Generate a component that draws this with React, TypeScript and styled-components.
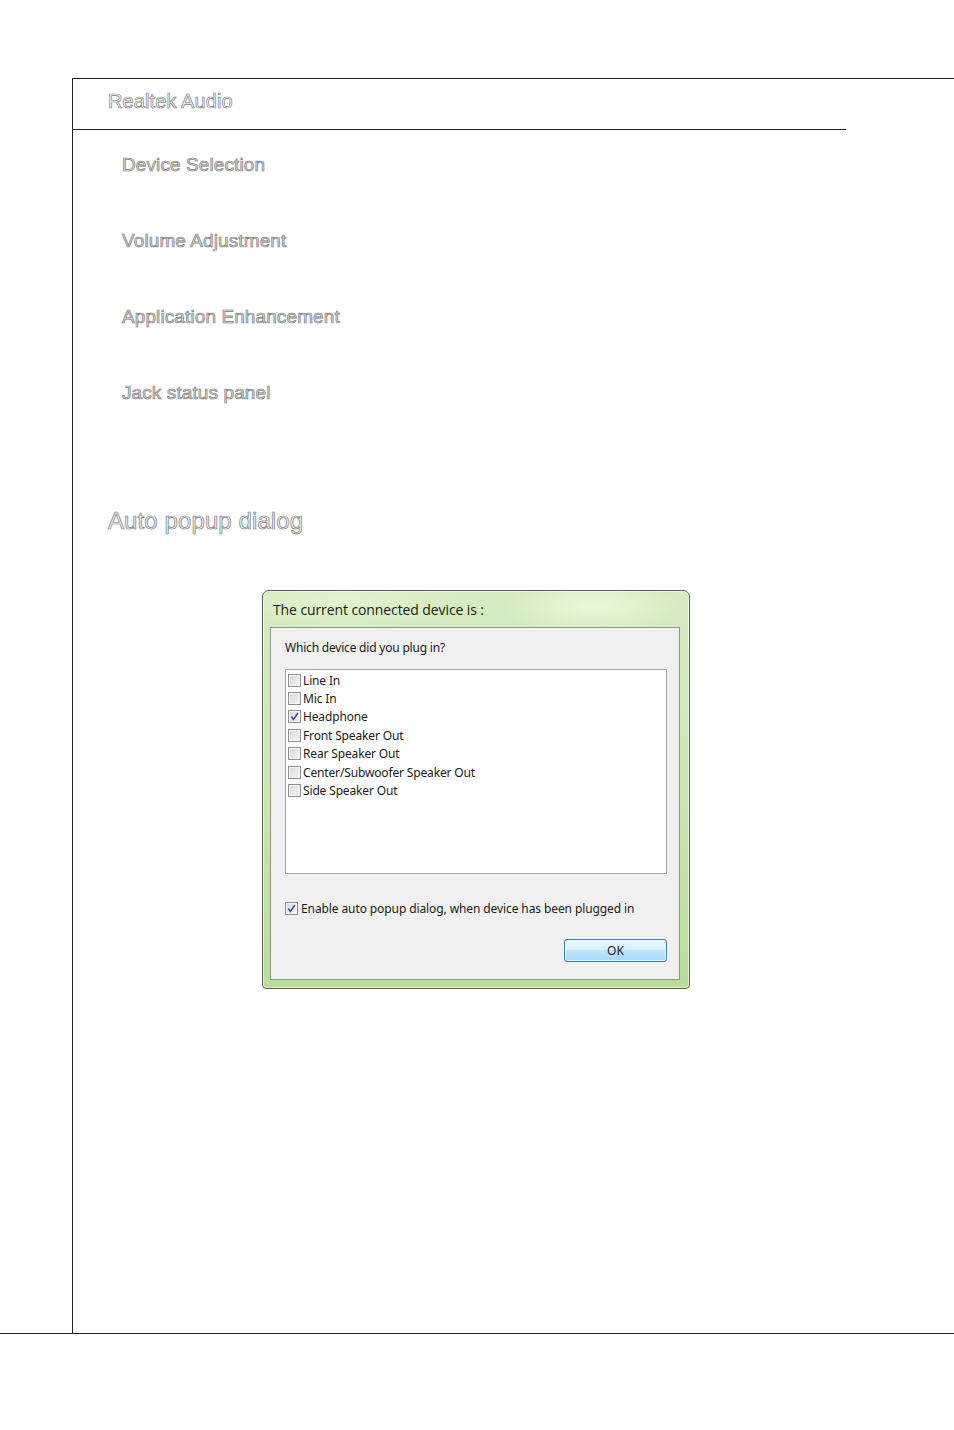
import React from "react";
import styled, { createGlobalStyle } from "styled-components";

const Global = createGlobalStyle`
  html, body { margin: 0; padding: 0; background: #ffffff; }
  body { font-family: "Liberation Sans", Arial, sans-serif; }
`;

const Page = styled.div`
  width: 954px;
  height: 1430px;
  padding-top: 78px;
  box-sizing: border-box;
  position: relative;
`;

const Frame = styled.div`
  margin-left: 72px;
  height: 1255px;
  border-left: 1px solid #231f20;
  border-top: 1px solid #231f20;
  box-sizing: border-box;
  display: flex;
  flex-direction: column;
`;

const BottomRule = styled.div`
  width: 954px;
  height: 1px;
  background: #231f20;
`;

const Header = styled.div`
  width: 773px;
  height: 51px;
  border-bottom: 1px solid #231f20;
  box-sizing: border-box;
  padding: 12px 0 0 35px;
`;

const Outline = styled.div<{ $size: number; $fill: string }>`
  font-family: "Liberation Sans", Arial, sans-serif;
  font-size: ${(p) => p.$size}px;
  line-height: 1;
  color: ${(p) => p.$fill};
  -webkit-text-stroke: 0.7px #808080;
  letter-spacing: 0.1px;
  white-space: nowrap;
`;

const SectionList = styled.div`
  display: flex;
  flex-direction: column;
  gap: 57px;
  padding: 25px 0 0 49px;
`;

const BigHeading = styled.div`
  padding: 107px 0 0 35px;
`;

const DialogWrap = styled.div`
  padding: 57px 0 0 189px;
`;

const Dialog = styled.div`
  width: 428px;
  height: 399px;
  box-sizing: border-box;
  border: 1px solid #5a5f58;
  border-radius: 7px 7px 4px 4px;
  background:
    radial-gradient(ellipse 90px 30px at 330px 15px, rgba(240, 252, 225, 0.8), transparent),
    radial-gradient(ellipse 120px 30px at 80px 10px, rgba(235, 250, 220, 0.6), transparent),
    linear-gradient(180deg, #d6ebc1 0%, #cfe7b5 40%, #b9dc98 100%);
  box-shadow: inset 0 0 0 1px rgba(255, 255, 255, 0.55);
  padding: 0 9px 8px 7px;
  display: flex;
  flex-direction: column;
`;

const TitleBar = styled.div`
  height: 36px;
  display: flex;
  align-items: center;
  padding-left: 3px;
  font-family: "Open Sans", "Noto Sans", sans-serif;
  font-size: 14px;
  color: #1a1a1a;
  letter-spacing: -0.1px;
`;

const Client = styled.div`
  flex: 1;
  background: #f0f0f0;
  border: 1px solid #8c9a84;
  padding: 12px 12px 0 14px;
  display: flex;
  flex-direction: column;
  font-family: "Noto Sans", "Liberation Sans", sans-serif;
  font-size: 12px;
  color: #1a1a1a;
`;

const Prompt = styled.div`
  height: 16px;
  line-height: 16px;
  letter-spacing: -0.2px;
`;

const ListBox = styled.div`
  margin-top: 13px;
  height: 205px;
  background: #ffffff;
  border: 1px solid #a5a5a5;
  box-sizing: border-box;
  padding: 1px 0 0 2px;
  display: flex;
  flex-direction: column;
`;

const Row = styled.div`
  height: 18.4px;
  display: flex;
  align-items: center;
  gap: 2px;
  letter-spacing: -0.15px;
  white-space: nowrap;
`;

const Box = styled.span`
  width: 13px;
  height: 13px;
  box-sizing: border-box;
  border: 1px solid #8e8f8f;
  background: linear-gradient(135deg, #d8d8d8 0%, #f4f4f4 100%);
  box-shadow: inset 0 0 0 1px #f6f6f6;
  display: inline-flex;
  align-items: center;
  justify-content: center;
  flex: none;
`;

const Check = () => (
  <svg width="9" height="9" viewBox="0 0 9 9">
    <path d="M1.3 4.6 L3.4 7.4 L7.8 1.2" fill="none" stroke="#3a4d9a" strokeWidth="1.6" />
  </svg>
);

const EnableRow = styled(Row)`
  margin-top: 25px;
  gap: 3px;
  letter-spacing: -0.1px;
`;

const ButtonRow = styled.div`
  margin-top: 22px;
  display: flex;
  justify-content: flex-end;
`;

const OkButton = styled.button`
  width: 103px;
  height: 23px;
  box-sizing: border-box;
  border: 1px solid #3c7fb1;
  border-radius: 3px;
  background: linear-gradient(180deg, #eaf6fd 0%, #d9f0fc 45%, #bee6fd 50%, #a7d9f5 100%);
  box-shadow: inset 0 0 0 1px #e6f4fc;
  font-family: "Noto Sans", "Liberation Sans", sans-serif;
  font-size: 12px;
  color: #1a1a1a;
  padding: 0;
`;

const items = [
  { label: "Line In", checked: false },
  { label: "Mic In", checked: false },
  { label: "Headphone", checked: true },
  { label: "Front Speaker Out", checked: false },
  { label: "Rear Speaker Out", checked: false },
  { label: "Center/Subwoofer Speaker Out", checked: false },
  { label: "Side Speaker Out", checked: false },
];

const sections = [
  "Device Selection",
  "Volume Adjustment",
  "Application Enhancement",
  "Jack status panel",
];

export default function App() {
  return (
    <>
      <Global />
      <Page>
        <Frame>
          <Header>
            <Outline $size={20} $fill="#fbfbfb">Realtek Audio</Outline>
          </Header>
          <SectionList>
            {sections.map((s) => (
              <Outline key={s} $size={19} $fill="#d9d9d9">
                {s}
              </Outline>
            ))}
          </SectionList>
          <BigHeading>
            <Outline $size={24} $fill="#ececec">Auto popup dialog</Outline>
          </BigHeading>
          <DialogWrap>
            <Dialog>
              <TitleBar>The current connected device is :</TitleBar>
              <Client>
                <Prompt>Which device did you plug in?</Prompt>
                <ListBox>
                  {items.map((it) => (
                    <Row key={it.label}>
                      <Box>{it.checked && <Check />}</Box>
                      <span>{it.label}</span>
                    </Row>
                  ))}
                </ListBox>
                <EnableRow>
                  <Box>
                    <Check />
                  </Box>
                  <span>Enable auto popup dialog, when device has been plugged in</span>
                </EnableRow>
                <ButtonRow>
                  <OkButton>OK</OkButton>
                </ButtonRow>
              </Client>
            </Dialog>
          </DialogWrap>
        </Frame>
        <BottomRule />
      </Page>
    </>
  );
}
